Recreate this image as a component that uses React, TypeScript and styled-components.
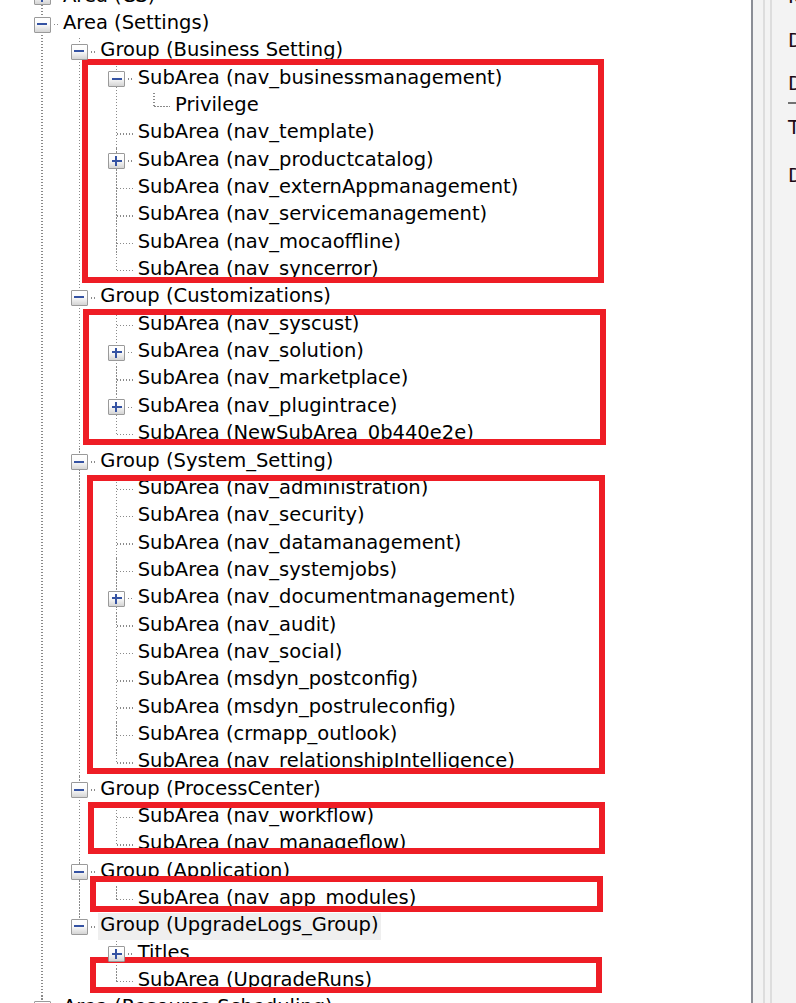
import styled, { createGlobalStyle } from 'styled-components'

type TreeItem = {
  label: string
  children?: TreeItem[]
  collapsed?: boolean
  selected?: boolean
}

const sub = (name: string, extra: Partial<TreeItem> = {}): TreeItem => ({
  label: `SubArea (${name})`,
  ...extra,
})

const tree: TreeItem[] = [
  { label: 'Area (CS)', collapsed: true },
  {
    label: 'Area (Settings)',
    children: [
      {
        label: 'Group (Business Setting)',
        children: [
          sub('nav_businessmanagement', { children: [{ label: 'Privilege' }] }),
          sub('nav_template'),
          sub('nav_productcatalog', { collapsed: true }),
          sub('nav_externAppmanagement'),
          sub('nav_servicemanagement'),
          sub('nav_mocaoffline'),
          sub('nav_syncerror'),
        ],
      },
      {
        label: 'Group (Customizations)',
        children: [
          sub('nav_syscust'),
          sub('nav_solution', { collapsed: true }),
          sub('nav_marketplace'),
          sub('nav_plugintrace', { collapsed: true }),
          sub('NewSubArea_0b440e2e'),
        ],
      },
      {
        label: 'Group (System_Setting)',
        children: [
          sub('nav_administration'),
          sub('nav_security'),
          sub('nav_datamanagement'),
          sub('nav_systemjobs'),
          sub('nav_documentmanagement', { collapsed: true }),
          sub('nav_audit'),
          sub('nav_social'),
          sub('msdyn_postconfig'),
          sub('msdyn_postruleconfig'),
          sub('crmapp_outlook'),
          sub('nav_relationshipIntelligence'),
        ],
      },
      {
        label: 'Group (ProcessCenter)',
        children: [sub('nav_workflow'), sub('nav_manageflow')],
      },
      {
        label: 'Group (Application)',
        children: [sub('nav_app_modules')],
      },
      {
        label: 'Group (UpgradeLogs_Group)',
        selected: true,
        children: [{ label: 'Titles', collapsed: true }, sub('UpgradeRuns')],
      },
    ],
  },
  { label: 'Area (Resource Scheduling)', collapsed: true },
]

// annotation frames drawn over the screenshot
const marks = [
  { x: 82, y: 59, w: 522, h: 224 },
  { x: 83, y: 309, w: 523, h: 136 },
  { x: 87, y: 475, w: 518, h: 299 },
  { x: 88, y: 802, w: 517, h: 52 },
  { x: 90, y: 876, w: 513, h: 36 },
  { x: 90, y: 957, w: 512, h: 36 },
]

const sideRows = [
  { text: 'Icon', gap: -13.5 },
  { text: 'Display Name', gap: 24 },
  { text: 'Description', gap: 23 },
  { text: 'Title', gap: 24 },
  { text: 'Description', gap: 28 },
]

const ROW = 27.35
const INDENT = 37.35
const LINE_X = 42
const DOTS_V = 'repeating-linear-gradient(to bottom, #8a8a8a 0 1.5px, transparent 1.5px 3px)'
const DOTS_H = 'repeating-linear-gradient(to right, #8a8a8a 0 1.5px, transparent 1.5px 3px)'

function Node({ item, last }: { item: TreeItem; last: boolean }) {
  const expandable = item.collapsed || !!item.children?.length
  return (
    <Item $last={last}>
      <Row>
        <Slot>
          {expandable ? (
            <>
              <Expander $open={!item.collapsed} />
              <HDots $offset={3} />
            </>
          ) : (
            <HDots $offset={8.5} />
          )}
        </Slot>
        <Label $selected={item.selected}>{item.label}</Label>
      </Row>
      {!item.collapsed && item.children && (
        <Children>
          {item.children.map((c, i) => (
            <Node key={c.label} item={c} last={i === item.children!.length - 1} />
          ))}
        </Children>
      )}
    </Item>
  )
}

export default function App() {
  return (
    <>
      <GlobalStyle />
      <Screen>
        <TreePane>
          <TreeRoot>
            {tree.map((n, i) => (
              <Node key={n.label} item={n} last={i === tree.length - 1} />
            ))}
          </TreeRoot>
          {marks.map((m, i) => (
            <Mark key={i} style={{ left: m.x, top: m.y, width: m.w, height: m.h }} />
          ))}
        </TreePane>
        <Splitter />
        <SidePane>
          <Rail />
          <RailLine />
          <RailGap />
          <RailLine />
          <SideContent>
            {sideRows.map((r, i) => (
              <SideBlock key={i} $gap={r.gap}>
                {i === 3 && <SideRule />}
                <SideLabel>{r.text}</SideLabel>
              </SideBlock>
            ))}
          </SideContent>
        </SidePane>
      </Screen>
    </>
  )
}

const GlobalStyle = createGlobalStyle`
  html, body {
    margin: 0;
    padding: 0;
    background: #fff;
    overflow: hidden;
  }
  body {
    font-family: "DejaVu Sans", "Noto Sans CJK JP", sans-serif;
    font-size: 19.5px;
    color: #000;
  }
`

const Screen = styled.div`
  display: flex;
  width: 796px;
  height: 1003px;
  overflow: hidden;
`

const TreePane = styled.div`
  position: relative;
  flex: 0 0 751px;
  height: 100%;
  overflow: hidden;
  background: #fff;
`

const TreeRoot = styled.ul`
  list-style: none;
  margin: -16.5px 0 0;
  padding: 0;
`

const Children = styled.ul`
  list-style: none;
  margin: 0;
  padding: 0 0 0 ${INDENT}px;
`

const Item = styled.li<{ $last: boolean }>`
  position: relative;

  &::before {
    content: '';
    position: absolute;
    left: ${LINE_X - 0.75}px;
    top: 0;
    width: 1.5px;
    height: ${(p) => (p.$last ? `${ROW / 2}px` : '100%')};
    background: ${DOTS_V};
  }
`

const Row = styled.div`
  position: relative;
  display: flex;
  align-items: center;
  height: ${ROW}px;
  padding-left: ${LINE_X - 8.5}px;
  white-space: nowrap;
`

const Slot = styled.div`
  display: flex;
  align-items: center;
  flex: 0 0 24.5px;
  height: 100%;
`

const Expander = styled.span<{ $open: boolean }>`
  position: relative;
  z-index: 1;
  flex: 0 0 17px;
  height: 16px;
  box-sizing: border-box;
  border: 1.5px solid #9a9a9a;
  border-radius: 1px;
  background: linear-gradient(#ffffff 0%, #fbfbfb 45%, #d4d4d4 100%);

  &::before,
  &::after {
    content: '';
    position: absolute;
    background: #3553a3;
  }
  &::before {
    left: 2.5px;
    right: 2.5px;
    top: 5.5px;
    height: 2px;
  }
  &::after {
    display: ${(p) => (p.$open ? 'none' : 'block')};
    top: 2px;
    bottom: 2px;
    left: 6px;
    width: 2px;
  }
`

const HDots = styled.span<{ $offset: number }>`
  flex: 1;
  height: 1.5px;
  margin-left: ${(p) => p.$offset}px;
  background: ${DOTS_H};
`

const Label = styled.span<{ $selected?: boolean }>`
  box-sizing: border-box;
  height: 27px;
  margin-left: 3px;
  padding: 2px 2px 5px;
  line-height: 20px;
  background: ${(p) => (p.$selected ? '#efefef' : 'transparent')};
`

const Mark = styled.div`
  position: absolute;
  box-sizing: border-box;
  border: 6px solid #ee1d25;
  pointer-events: none;
`

const Splitter = styled.div`
  flex: 0 0 2px;
  background: #8b8e96;
`

const SidePane = styled.div`
  flex: 1;
  display: flex;
  background: #f3f3f3;
  overflow: hidden;
`

const Rail = styled.div`
  flex: 0 0 10px;
`

const RailLine = styled.div`
  flex: 0 0 2px;
  background: #dddddd;
`

const RailGap = styled.div`
  flex: 0 0 5px;
`

const SideContent = styled.div`
  flex: 1;
  display: flex;
  flex-direction: column;
  padding-left: 16px;
  overflow: hidden;
  white-space: nowrap;
`

const SideBlock = styled.div<{ $gap: number }>`
  margin-top: ${(p) => p.$gap}px;
`

const SideRule = styled.div`
  height: 2px;
  margin: -15.5px 0 13.5px;
  background: #727272;
`

const SideLabel = styled.div`
  line-height: 20px;
  color: #1c0a16;
`
